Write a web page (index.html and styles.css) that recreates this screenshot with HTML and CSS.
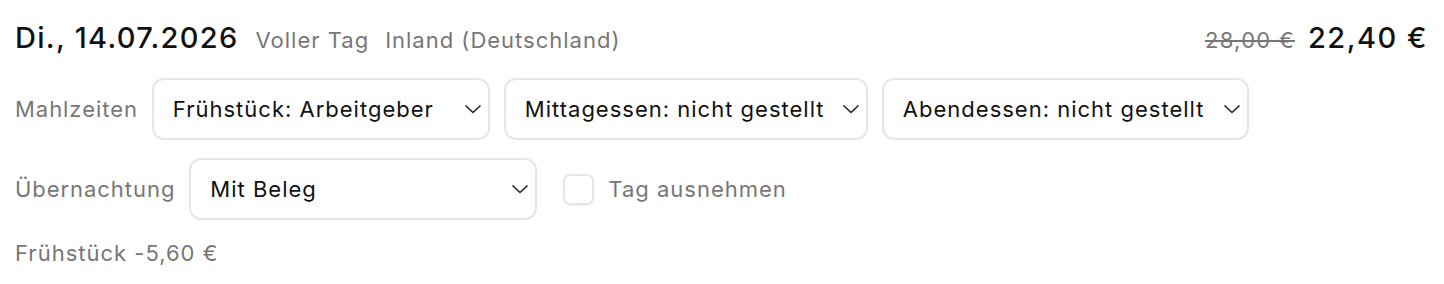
FILE: index.html
```html
<!DOCTYPE html>
<html lang="de">
<head>
<meta charset="utf-8">
<link rel="stylesheet" href="styles.css">
</head>
<body>
<div class="day">
  <div class="head">
    <div class="head-left">
      <span class="date">Di., 14.07.2026</span>
      <span class="meta">Voller Tag</span>
      <span class="meta">Inland (Deutschland)</span>
    </div>
    <div class="head-right">
      <span class="old">28,00 €</span>
      <span class="price">22,40 €</span>
    </div>
  </div>
  <div class="row row-meals">
    <span class="label">Mahlzeiten</span>
    <div class="select w-breakfast"><span>Frühstück: Arbeitgeber</span><svg class="chev" viewBox="0 0 18 10"><path d="M1.5 1.5 9 8.5l7.5-7"/></svg></div>
    <div class="select w-lunch"><span>Mittagessen: nicht gestellt</span><svg class="chev" viewBox="0 0 18 10"><path d="M1.5 1.5 9 8.5l7.5-7"/></svg></div>
    <div class="select w-dinner"><span>Abendessen: nicht gestellt</span><svg class="chev" viewBox="0 0 18 10"><path d="M1.5 1.5 9 8.5l7.5-7"/></svg></div>
  </div>
  <div class="row row-stay">
    <span class="label">Übernachtung</span>
    <div class="select w-stay"><span>Mit Beleg</span><svg class="chev" viewBox="0 0 18 10"><path d="M1.5 1.5 9 8.5l7.5-7"/></svg></div>
    <label class="check"><span class="box"></span><span class="check-text">Tag ausnehmen</span></label>
  </div>
  <div class="note">Frühstück -5,60 €</div>
</div>
</body>
</html>
```
FILE: styles.css
```css
* { box-sizing: border-box; }
html, body { margin: 0; background: #fff; }
body {
  font-family: Inter, "Noto Sans", sans-serif;
  color: #111;
  padding: 20px 16px 0 15px;
}
.head {
  display: flex;
  justify-content: space-between;
  align-items: baseline;
  height: 41px;
}
.head-left { display: flex; align-items: baseline; }
.date { font-size: 29px; font-weight: 500; letter-spacing: 1.3px; margin-right: 17px; }
.meta { font-size: 22px; letter-spacing: 1px; color: #777; margin-right: 16px; }
.head-right { display: flex; align-items: baseline; gap: 13px; }
.old { font-size: 22px; letter-spacing: 1.3px; color: #777; text-decoration: line-through; }
.price { font-size: 29px; font-weight: 500; letter-spacing: 1.5px; }
.row { display: flex; align-items: center; gap: 14px; }
.row-meals { margin-top: 17px; }
.row-stay { margin-top: 18px; gap: 14px; }
.label { font-size: 22px; letter-spacing: 0.95px; color: #777; }
.select {
  height: 62px;
  border: 2px solid #e6e6e6;
  border-radius: 12px;
  display: flex;
  align-items: center;
  justify-content: space-between;
  padding: 0 6px 0 19px;
  font-size: 22px;
  letter-spacing: 1px;
  color: #111;
}
.chev { width: 18px; height: 10px; fill: none; stroke: #222; stroke-width: 1.6; }
.w-breakfast { width: 338px; }
.w-lunch { width: 364px; }
.w-dinner { width: 367px; }
.w-stay { width: 348px; }
.check { display: flex; align-items: center; gap: 14px; margin-left: 12px; }
.box {
  width: 31px; height: 31px;
  border: 2px solid #e6e6e6;
  border-radius: 7px;
  box-shadow: 0 1px 2px rgba(0,0,0,0.06);
}
.check-text { font-size: 22px; letter-spacing: 1px; color: #777; }
.note { margin-top: 20px; font-size: 22px; letter-spacing: 1px; color: #777; }
```
